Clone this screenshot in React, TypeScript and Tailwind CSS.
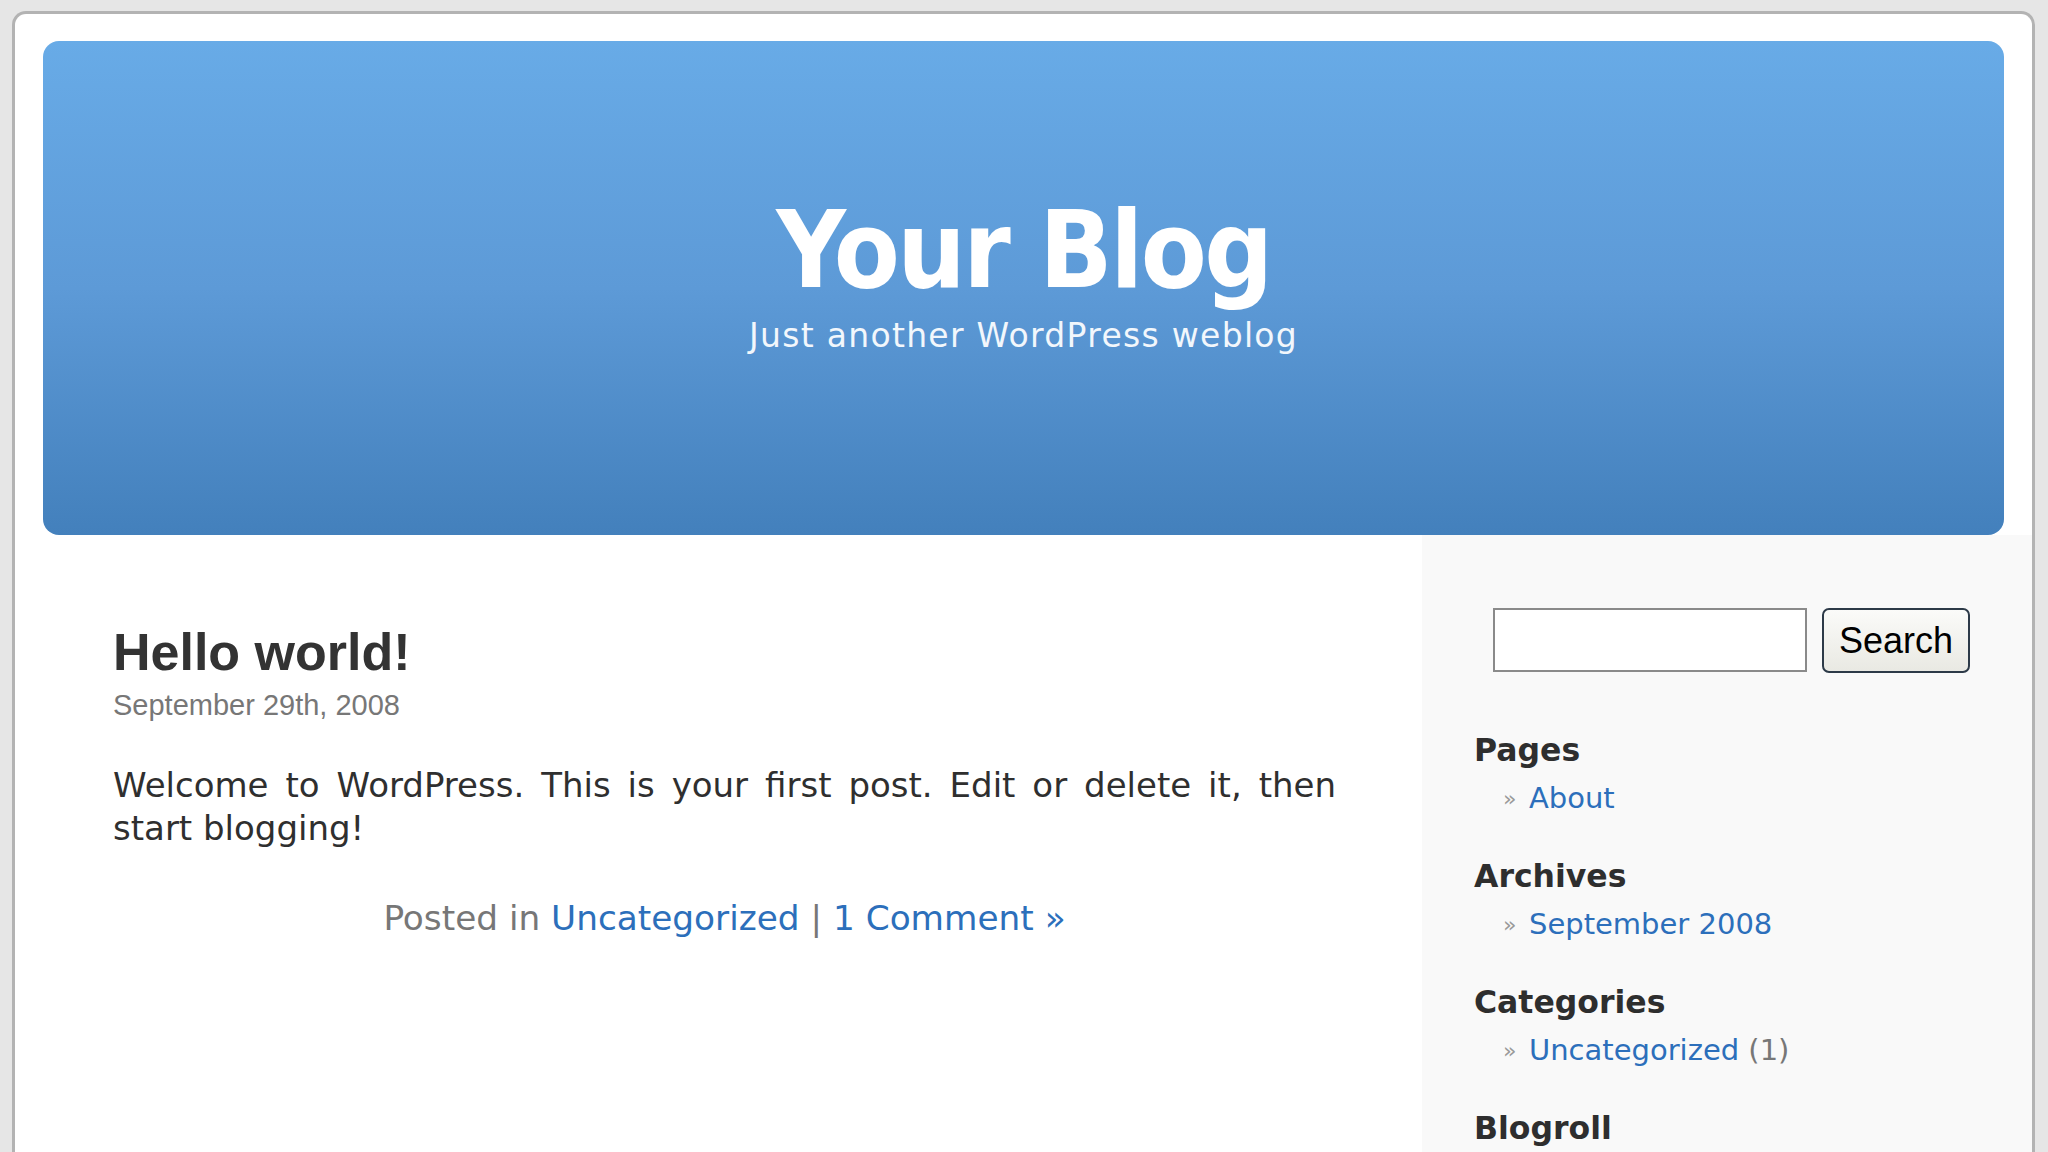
import React from 'react';

const linkColor = 'text-[#2c6fbb]';

const Widget: React.FC<{ title: string; children?: React.ReactNode }> = ({ title, children }) => (
  <div className="mb-[48px]">
    <h2 className="font-['DejaVu_Sans',sans-serif] text-[31.5px] leading-none font-bold text-[#2e2e2e]">{title}</h2>
    {children}
  </div>
);

const Item: React.FC<{ children: React.ReactNode }> = ({ children }) => (
  <div className="mt-[17.5px] pl-[29px] flex items-center font-['DejaVu_Sans',sans-serif] text-[29px] leading-none">
    <span className="w-[26px] text-[22px] text-[#9a9a9a]">»</span>
    <span>{children}</span>
  </div>
);

const App: React.FC = () => {
  return (
    <div className="h-[1152px] overflow-hidden bg-[#e6e6e6] pt-[11px] pl-[12px] pr-[13px]">
      <div className="h-full rounded-t-[14px] border-[3px] border-b-0 border-[#b3b3b3] bg-white flex flex-col">
        {/* Header */}
        <div className="px-[28px] pt-[27px]">
          <div className="h-[494px] rounded-[16px] bg-gradient-to-b from-[#68abe7] via-[#5d9ad7] to-[#4380bc] pt-[156px] text-center text-white">
            <h1 className="font-['DejaVu_Sans',sans-serif] font-stretch-condensed text-[107px] leading-none font-bold tracking-[-2.5px]">
              Your Blog
            </h1>
            <p className="mt-[15px] font-['DejaVu_Sans',sans-serif] text-[33px] leading-none tracking-[1.3px] text-[#f2f7fc]">
              Just another WordPress weblog
            </p>
          </div>
        </div>

        {/* Body */}
        <div className="flex flex-1">
          {/* Main column */}
          <div className="flex-1 pl-[98px] pr-[86px] pt-[91px]">
            <h2 className="font-['Liberation_Sans',Arial,sans-serif] text-[52px] leading-none font-bold text-[#333]">
              Hello world!
            </h2>
            <div className="mt-[12.5px] font-['Liberation_Sans',Arial,sans-serif] text-[29px] leading-none text-[#777]">
              September 29th, 2008
            </div>
            <p className="mt-[44px] font-['DejaVu_Sans',sans-serif] text-[34px] leading-[43px] text-justify text-[#2f2f2f]">
              Welcome to WordPress. This is your first post. Edit or delete it, then start blogging!
            </p>
            <p className="mt-[47px] text-center font-['DejaVu_Sans',sans-serif] text-[34.3px] leading-[43px] text-[#777]">
              Posted in <a className={linkColor}>Uncategorized</a> | <a className={linkColor}>1 Comment »</a>
            </p>
          </div>

          {/* Sidebar */}
          <div className="w-[610px] bg-[#f9f9f9] pl-[52px] pt-[73px]">
            <div className="flex gap-[15px] pl-[19px]">
              <input
                type="text"
                className="w-[314px] h-[64px] border-2 border-[#8a8a8a] bg-white outline-none"
              />
              <button className="w-[148px] h-[65px] rounded-[7px] border-2 border-[#2d3a48] bg-gradient-to-b from-[#fbfbf9] to-[#e9e9e3] font-['Liberation_Sans',Arial,sans-serif] text-[36px] text-black">
                Search
              </button>
            </div>

            <div className="mt-[62px]">
              <Widget title="Pages">
                <Item><a className={linkColor}>About</a></Item>
              </Widget>
              <Widget title="Archives">
                <Item><a className={linkColor}>September 2008</a></Item>
              </Widget>
              <Widget title="Categories">
                <Item>
                  <a className={linkColor}>Uncategorized</a> <span className="text-[#777]">(1)</span>
                </Item>
              </Widget>
              <Widget title="Blogroll" />
            </div>
          </div>
        </div>
      </div>
    </div>
  );
};

export default App;
